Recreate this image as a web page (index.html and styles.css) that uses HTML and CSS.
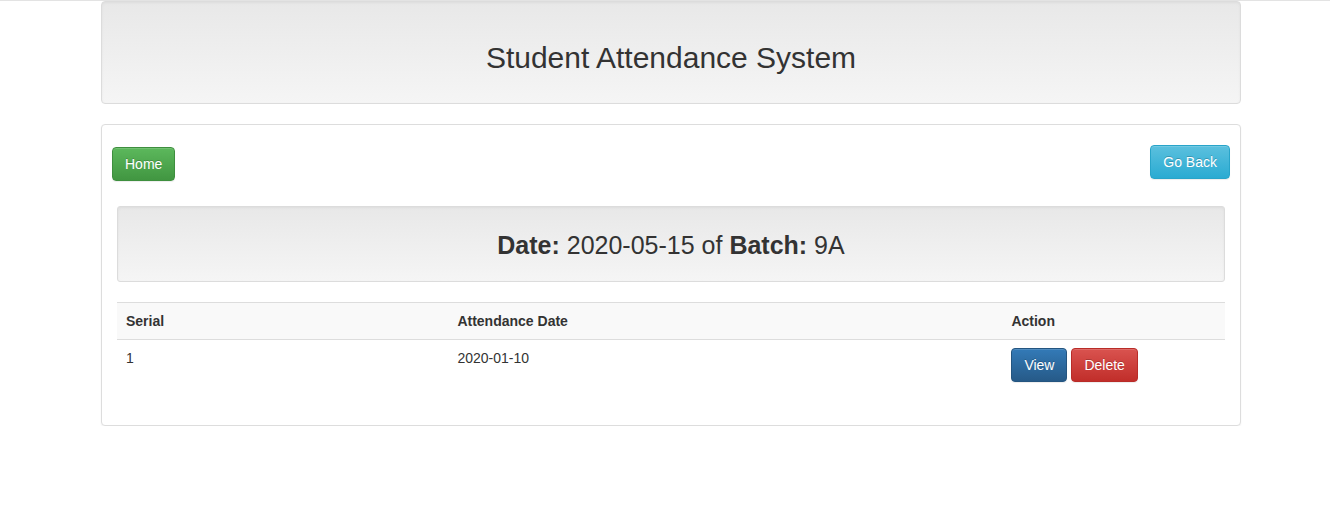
FILE: index.html
```html
<!DOCTYPE html>
<html>
<head>
<meta charset="utf-8">
<title>Student Attendance System</title>
<link rel="stylesheet" href="styles.css">
</head>
<body>
<div class="topline"></div>
<div class="container">
  <div class="well header">
    <h2>Student Attendance System</h2>
  </div>
  <div class="panel">
    <div class="panel-body">
      <div class="topbar">
        <a class="btn btn-success home">Home</a>
        <a class="btn btn-info back">Go Back</a>
      </div>
      <div class="well well-sm info">
        <h3><strong>Date:</strong> 2020-05-15 of <strong>Batch:</strong> 9A</h3>
      </div>
      <table class="table">
        <thead>
          <tr>
            <th class="c1">Serial</th>
            <th class="c2">Attendance Date</th>
            <th class="c3">Action</th>
          </tr>
        </thead>
        <tbody>
          <tr>
            <td class="first">1</td>
            <td>2020-01-10</td>
            <td><a class="btn btn-primary">View</a> <a class="btn btn-danger">Delete</a></td>
          </tr>
        </tbody>
      </table>
    </div>
  </div>
</div>
</body>
</html>
```

FILE: styles.css
```css
* { box-sizing: border-box; }
html, body { margin: 0; padding: 0; }
body {
  font-family: "Liberation Sans", Arial, Helvetica, sans-serif;
  font-size: 14px;
  line-height: 1.42857143;
  color: #333;
  background: #fff;
}
.topline {
  height: 1px;
  background: #e3e3e3;
}
.container {
  width: 1140px;
  margin-left: 101px;
}
.well {
  background-image: linear-gradient(to bottom, #e8e8e8 0, #f5f5f5 100%);
  border: 1px solid #dcdcdc;
  border-radius: 4px;
  box-shadow: inset 0 1px 3px rgba(0,0,0,.05), 0 1px 0 rgba(255,255,255,.1);
  padding: 19px;
  margin-bottom: 20px;
  text-align: center;
}
.well-sm { padding: 9px; border-radius: 3px; }
h2, h3 {
  font-weight: 400;
  line-height: 1.1;
  color: #333;
  margin: 20px 0 10px;
}
h2 { font-size: 30px; }
h3 {
  font-size: 25px;
  line-height: 27px;
  margin: 16px 0 13px;
}
h3 strong { font-weight: 700; }
.panel {
  border: 1px solid #ddd;
  border-radius: 4px;
  box-shadow: 0 1px 2px rgba(0,0,0,.05);
  background: #fff;
}
.panel-body { padding: 15px; }
.topbar {
  display: flex;
  justify-content: space-between;
  align-items: flex-start;
  margin: 5px -5px 0;
}
.home { margin-top: 2px; }
.info { margin-top: 25px; }
.btn {
  display: inline-block;
  padding: 6px 12px;
  font-size: 14px;
  line-height: 1.42857143;
  border: 1px solid transparent;
  border-radius: 4px;
  color: #fff;
  text-shadow: 0 -1px 0 rgba(0,0,0,.2);
  box-shadow: inset 0 1px 0 rgba(255,255,255,.15), 0 1px 1px rgba(0,0,0,.075);
  text-decoration: none;
  vertical-align: middle;
  cursor: pointer;
}
.btn-success { background-image: linear-gradient(to bottom, #5cb85c 0, #419641 100%); border-color: #3e8f3e; }
.btn-info { background-image: linear-gradient(to bottom, #5bc0de 0, #2aabd2 100%); border-color: #28a4c9; }
.btn-primary { background-image: linear-gradient(to bottom, #337ab7 0, #265a88 100%); border-color: #245580; }
.btn-danger { background-image: linear-gradient(to bottom, #d9534f 0, #c12e2a 100%); border-color: #b92c28; }
.table {
  width: 100%;
  border-collapse: collapse;
  border-spacing: 0;
  margin-bottom: 20px;
}
.table th, .table td {
  padding: 8px;
  line-height: 1.42857143;
  text-align: left;
  vertical-align: top;
}
.table .c1, .table .first { padding-left: 9px; }
.table th {
  font-weight: 700;
  background: #f9f9f9;
  border-top: 1px solid #ddd;
  border-bottom: 1px solid #ddd;
}
.c1 { width: 30%; }
.c2 { width: 50%; }
.c3 { width: 20%; }
```
